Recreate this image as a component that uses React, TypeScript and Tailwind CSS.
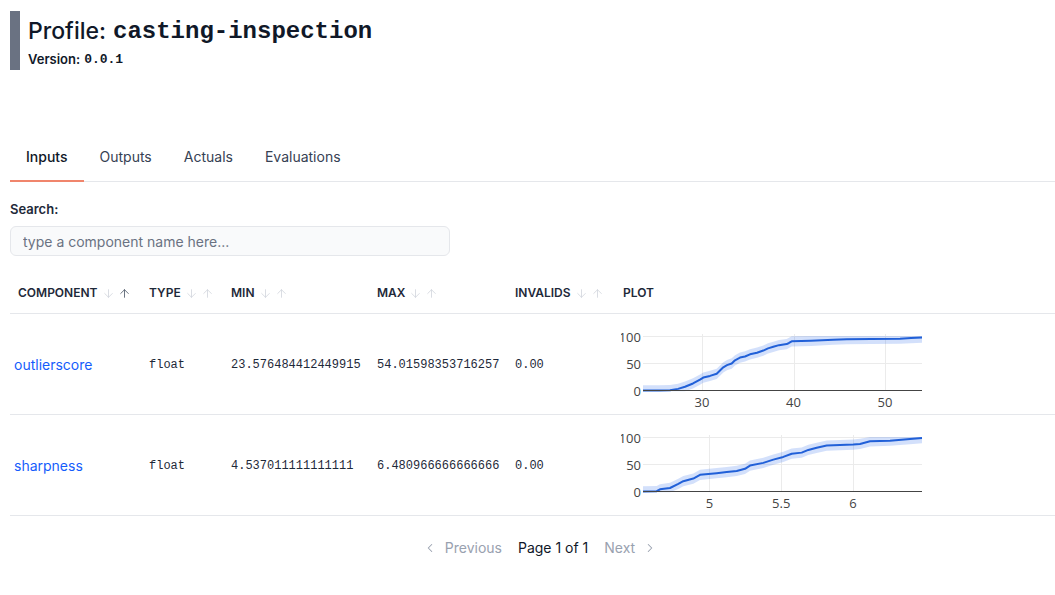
import { ArrowDown, ArrowUp, ChevronLeft, ChevronRight } from "lucide-react";

type Pt = [number, number];

interface Tick {
  x: number;
  label: string;
}

const COLS = "grid grid-cols-[131px_82px_146px_138px_108px_1fr]";
const MONO = "font-['Liberation_Mono',monospace]";

const ROWS: {
  name: string;
  type: string;
  min: string;
  max: string;
  invalids: string;
  ticks: Tick[];
  points: Pt[];
}[] = [
  {
    name: "outlierscore",
    type: "float",
    min: "23.576484412449915",
    max: "54.01598353716257",
    invalids: "0.00",
    ticks: [
      { x: 80.9, label: "30" },
      { x: 172.5, label: "40" },
      { x: 264, label: "50" },
    ],
    points: [
      [22, 0], [38, 0], [49, 0.5], [57, 3], [64, 7], [72, 13], [79, 20], [82.3, 24],
      [89, 27], [95.7, 31], [99, 37], [102.3, 43], [106, 47], [110.7, 50], [114, 56],
      [119, 61], [124, 63], [129, 67], [136, 70], [142.3, 74], [147, 78], [152.3, 81],
      [158, 84], [165.7, 86], [168, 88], [170.7, 91], [190, 92], [212.3, 94],
      [225.7, 95], [250, 95.5], [279, 96], [290, 97], [301, 98],
    ],
  },
  {
    name: "sharpness",
    type: "float",
    min: "4.537011111111111",
    max: "6.480966666666666",
    invalids: "0.00",
    ticks: [
      { x: 88.4, label: "5" },
      { x: 160.2, label: "5.5" },
      { x: 232, label: "6" },
    ],
    points: [
      [22, 0], [35.7, 0.5], [39, 4], [49, 6.5], [57.3, 14], [62.3, 19], [72.3, 24],
      [79, 31], [95.7, 34], [105.7, 36], [115.7, 38], [124, 42], [129, 48], [142.3, 53],
      [152.3, 59], [162.3, 64], [170.7, 70], [180.7, 72], [187.3, 77], [195.7, 81],
      [205.7, 85], [232.3, 87], [239, 88], [249, 93], [269, 94], [289, 97], [301, 99],
    ],
  },
];

const HEADERS = [
  { label: "COMPONENT", sort: true, active: true },
  { label: "TYPE", sort: true },
  { label: "MIN", sort: true },
  { label: "MAX", sort: true },
  { label: "INVALIDS", sort: true },
  { label: "PLOT", sort: false },
];

// cdf plot with a shaded confidence band, plotly-ish look
function Plot({ ticks, points }: { ticks: Tick[]; points: Pt[] }) {
  const y0 = 76.5;
  const y100 = 22.5;
  const y = (p: number) => y0 + ((y100 - y0) * p) / 100;
  const line = points.map(([x, p]) => `${x},${y(p).toFixed(2)}`).join(" ");
  const upper = points.map(([x, p]) => `${x},${y(Math.min(p + 9.5, 101)).toFixed(2)}`);
  const lower = [...points]
    .reverse()
    .map(([x, p]) => `${x},${y(Math.max(p - 9.5, -1.5)).toFixed(2)}`);

  return (
    <svg width={302} height={100} className="block">
      {ticks.map((t) => (
        <line key={t.label} x1={Math.round(t.x) + 0.5} x2={Math.round(t.x) + 0.5} y1={20} y2={76} stroke="#ebebeb" />
      ))}
      <line x1={22} x2={301} y1={49.5} y2={49.5} stroke="#ebebeb" />
      <line x1={22} x2={301} y1={22.5} y2={22.5} stroke="#ebebeb" />
      <polygon points={[...upper, ...lower].join(" ")} fill="#2563eb" fillOpacity={0.2} />
      <polyline points={line} fill="none" stroke="#2160d8" strokeWidth={2} strokeLinejoin="round" />
      <line x1={22} x2={301} y1={76.5} y2={76.5} stroke="#444" />
      <g fontFamily="'Open Sans', sans-serif" fontSize={13} fill="#444">
        <text x={20} y={27.5} textAnchor="end">100</text>
        <text x={20} y={54.5} textAnchor="end">50</text>
        <text x={20} y={81.5} textAnchor="end">0</text>
        {ticks.map((t) => (
          <text key={t.label} x={t.x} y={93} textAnchor="middle">
            {t.label}
          </text>
        ))}
      </g>
    </svg>
  );
}

function SortArrows({ active }: { active?: boolean }) {
  return (
    <span className="ml-[4px] flex items-center gap-[3px]">
      <ArrowDown size={13} strokeWidth={1.5} className="text-gray-300" />
      <ArrowUp size={13} strokeWidth={1.5} className={active ? "text-gray-600" : "text-gray-300"} />
    </span>
  );
}

export default function App() {
  const tabs = ["Inputs", "Outputs", "Actuals", "Evaluations"];

  return (
    <div className="min-h-[595px] bg-white pl-[10px] pt-[11px] font-['Inter',sans-serif] text-gray-900">
      <div className="h-[59px] border-l-[10px] border-gray-500 pl-2">
        <h1 className="flex h-[38px] items-center gap-[7px] pt-[3px] text-[23px] leading-none font-medium text-gray-900">
          <span>Profile:</span>
          <span className={`${MONO} text-[24px] leading-none font-bold`}>casting-inspection</span>
        </h1>
        <p className="flex h-5 items-center gap-1 text-[13px] leading-none font-semibold text-gray-900">
          <span>Version:</span>
          <span className={`${MONO} leading-none font-bold`}>0.0.1</span>
        </p>
      </div>

      <div className="mt-[67px] flex border-b border-gray-200">
        {tabs.map((t, i) => (
          <div
            key={t}
            className={
              i === 0
                ? "-mb-px border-b-2 border-[#f0856c] px-4 pt-[10px] pb-[13px] text-sm leading-5 font-medium text-gray-900"
                : "-mb-px border-b-2 border-transparent px-4 pt-[10px] pb-[13px] text-sm leading-5 text-gray-700"
            }
          >
            {t}
          </div>
        ))}
      </div>

      <label className="mt-[17px] block text-[13px] leading-5 font-semibold text-gray-800">Search:</label>
      <input
        type="text"
        placeholder="type a component name here..."
        className="mt-[7px] h-[30px] w-[440px] rounded-md border border-gray-200 bg-gray-50 px-3 text-sm text-gray-900 placeholder:text-gray-500 outline-none"
      />

      <div className="mt-[17px]">
        <div className={`${COLS} border-b border-gray-200`}>
          {HEADERS.map((h) => (
            <div key={h.label} className="flex items-center px-2 py-3 text-xs leading-4 font-semibold text-gray-800">
              {h.label}
              {h.sort && <SortArrows active={h.active} />}
            </div>
          ))}
        </div>

        {ROWS.map((r) => (
          <div key={r.name} className={`${COLS} h-[101px] items-center border-b border-gray-200`}>
            <div className="pl-1 pt-px text-sm text-blue-600">{r.name}</div>
            <div className={`${MONO} px-2 pt-px text-xs text-gray-800`}>{r.type}</div>
            <div className={`${MONO} px-2 pt-px text-xs text-gray-800`}>{r.min}</div>
            <div className={`${MONO} px-2 pt-px text-xs text-gray-800`}>{r.max}</div>
            <div className={`${MONO} px-2 pt-px text-xs text-gray-800`}>{r.invalids}</div>
            <div className="self-start pl-[6px]">
              <Plot ticks={r.ticks} points={r.points} />
            </div>
          </div>
        ))}
      </div>

      <div className="mt-[22px] flex items-center justify-center pl-[15px] text-sm leading-5">
        <span className="flex items-center gap-2 text-gray-400">
          <ChevronLeft size={14} strokeWidth={1.75} />
          Previous
        </span>
        <span className="mx-4 text-gray-900">Page 1 of 1</span>
        <span className="flex items-center gap-2 text-gray-400">
          Next
          <ChevronRight size={14} strokeWidth={1.75} />
        </span>
      </div>
    </div>
  );
}
